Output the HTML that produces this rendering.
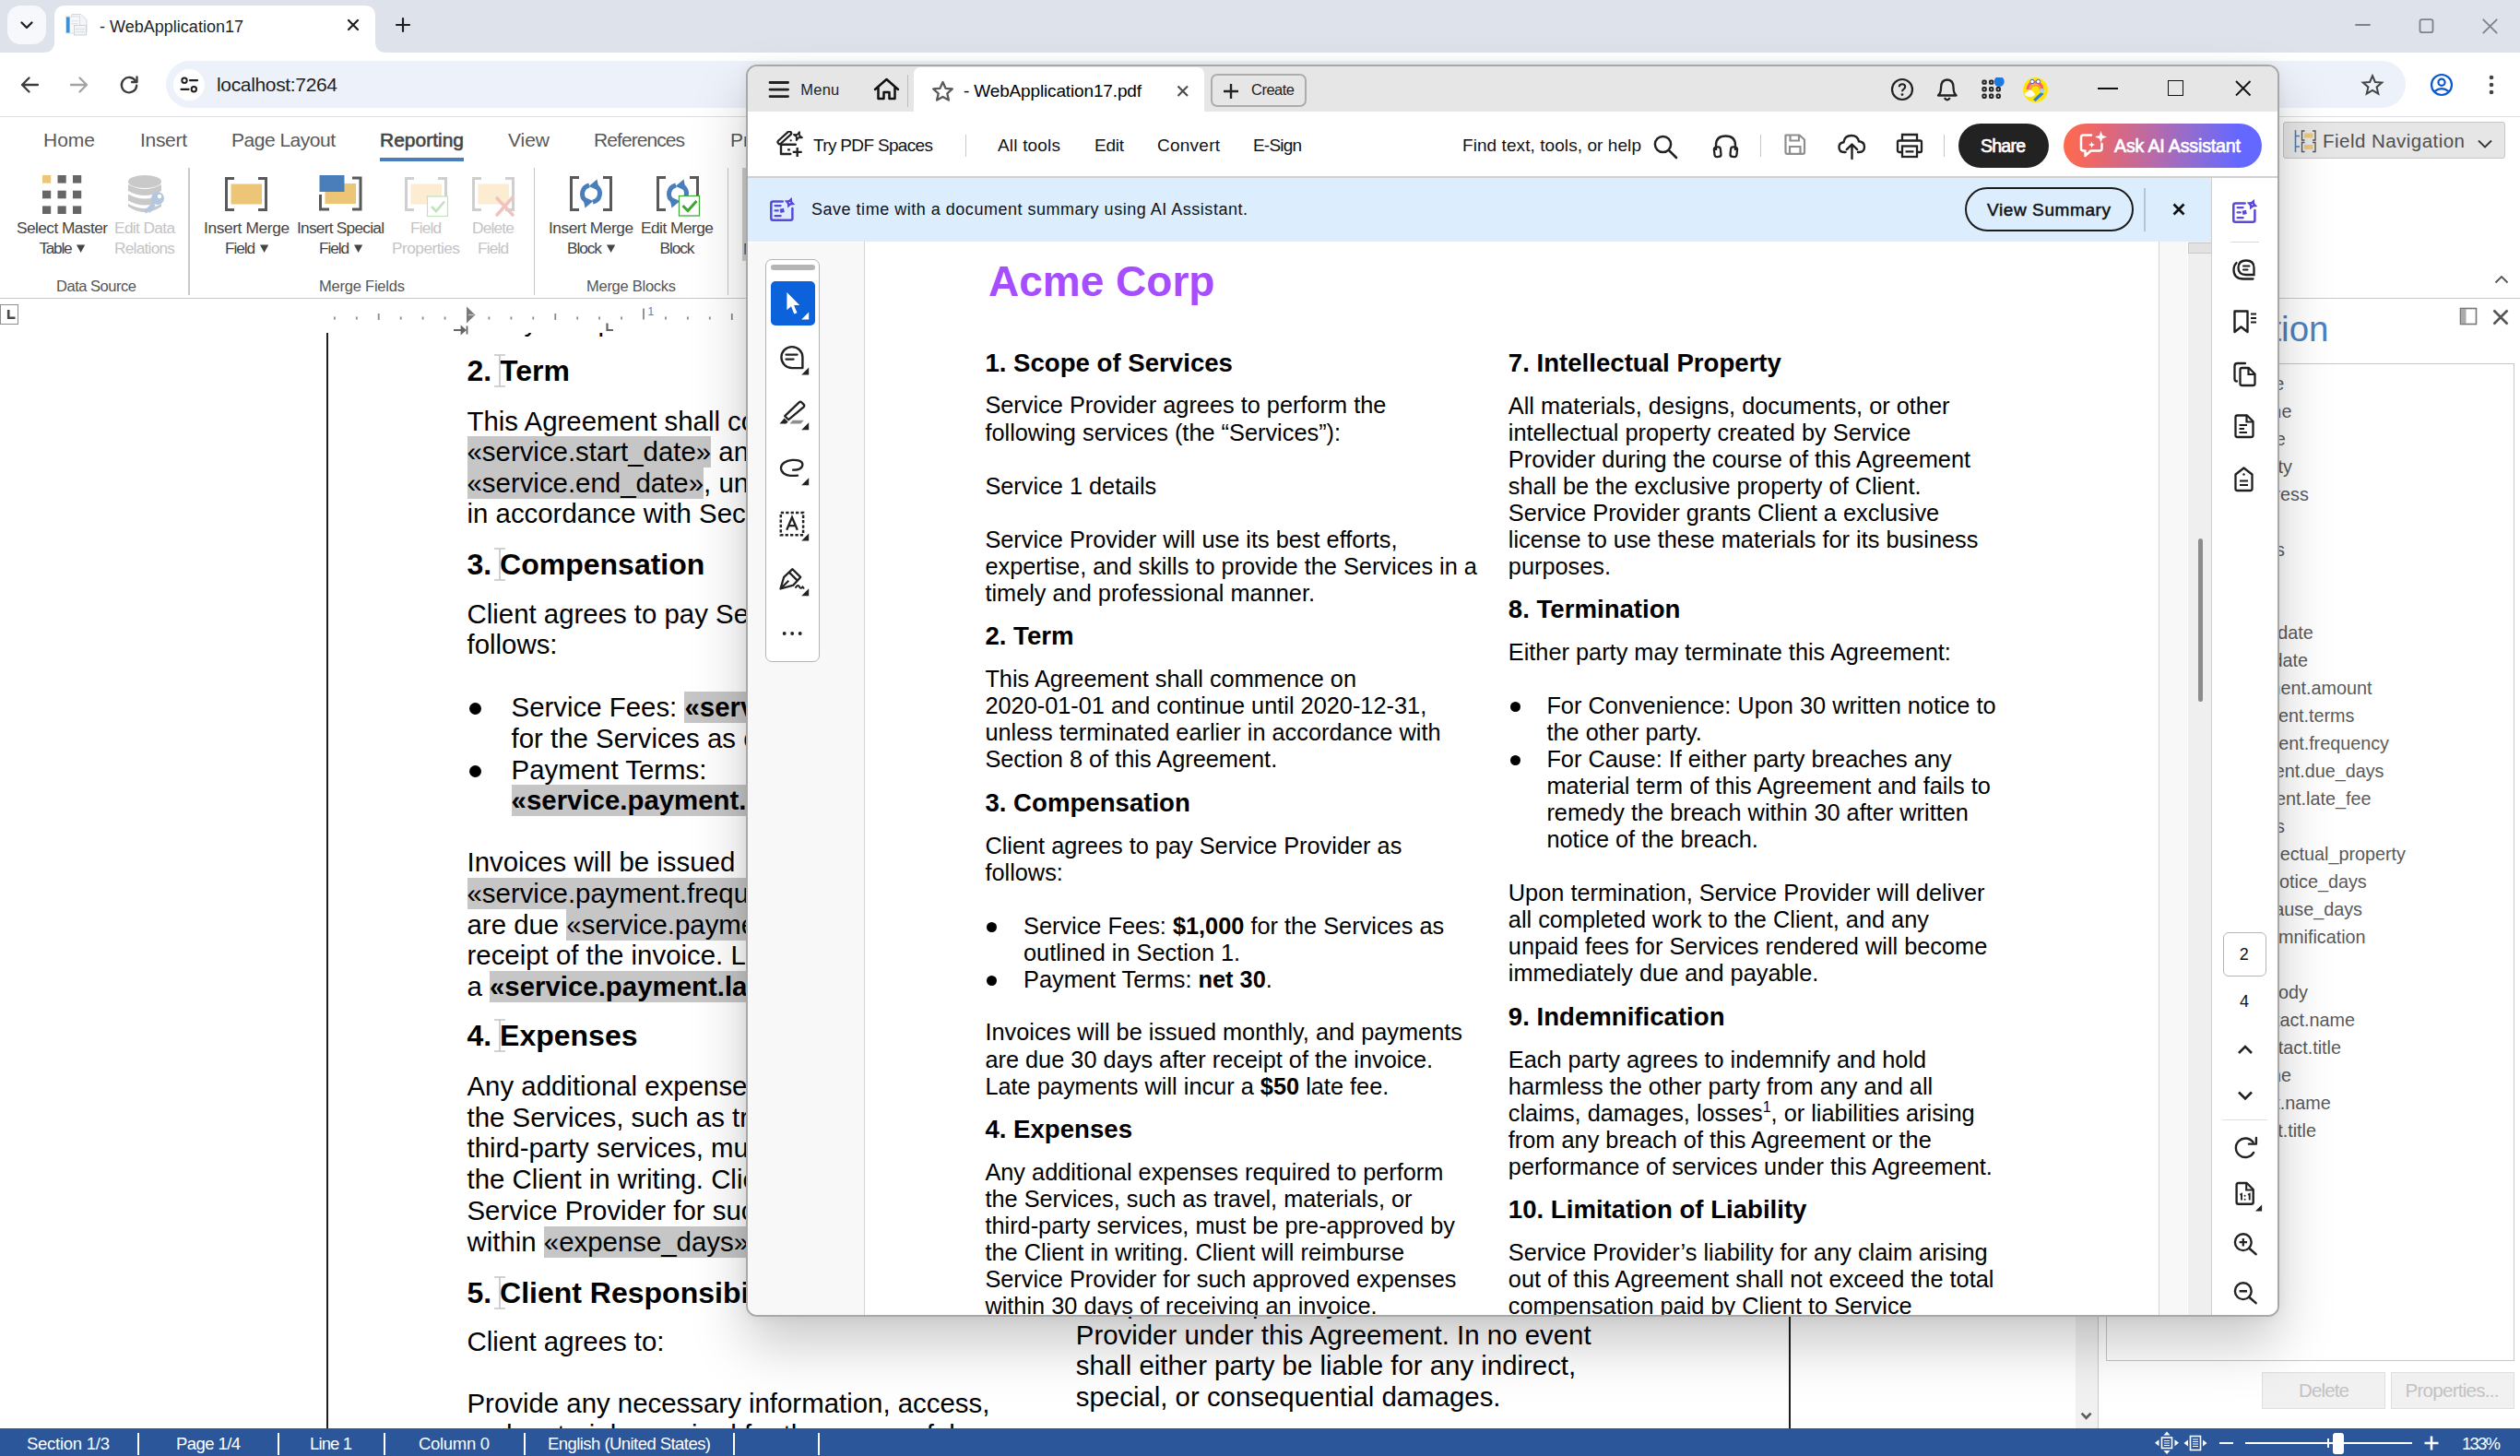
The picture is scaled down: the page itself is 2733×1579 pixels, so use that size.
<!DOCTYPE html>
<html lang="en"><head><meta charset="utf-8"><title>- WebApplication17</title>
<style>
html,body{margin:0;padding:0}
body{width:2733px;height:1579px;position:relative;overflow:hidden;background:#fff;font-family:"Liberation Sans",sans-serif}
.a{position:absolute;display:block}
.t{position:absolute;white-space:pre;line-height:1;font-family:"Liberation Sans",sans-serif}
</style></head>
<body>
<div class="a" style="left:0px;top:0px;width:2733px;height:57px;background:#dee2ea;"></div>
<div class="a" style="left:8px;top:6px;width:42px;height:42px;background:#f6f8fc;border-radius:14px;"></div>
<svg class="a" style="left:19px;top:17px;" width="20" height="20" viewBox="0 0 20 20"><path d="M4.5 7.5 L10 13 L15.5 7.5" fill="none" stroke="#1f1f1f" stroke-width="2.3" stroke-linecap="round" stroke-linejoin="round"/></svg>
<svg class="a" style="left:47px;top:6px;" width="372" height="51" viewBox="0 0 372 51"><path d="M0 51 Q12 51 12 39 L12 12 Q12 0 24 0 L348 0 Q360 0 360 12 L360 39 Q360 51 372 51 Z" fill="#fff"/></svg>
<svg class="a" style="left:70px;top:14px;" width="26" height="26" viewBox="0 0 26 26"><path d="M8 1.5h10l6 6v13h-16z" fill="#f4f5f7" stroke="#d3d6db" stroke-width="1"/>
<rect x="1.5" y="4" width="15" height="18" fill="#f7f8fa" stroke="#d9dce1" stroke-width="1"/>
<rect x="2" y="4.5" width="3.6" height="17" fill="#3f8fd6"/>
<rect x="7.5" y="8" width="7" height="1.2" fill="#dfe2e6"/><rect x="7.5" y="11" width="7" height="1.2" fill="#dfe2e6"/>
<rect x="10.5" y="13.5" width="13" height="10.5" fill="#f2f4f7" stroke="#cfd3d9" stroke-width="1"/>
<rect x="12" y="17" width="10" height="1.2" fill="#dde0e5"/><rect x="12" y="20" width="10" height="1.2" fill="#dde0e5"/></svg>
<span class="t" style="left:108.00px;top:20.00px;font-size:18px;color:#1f1f1f;letter-spacing:0.014px;">- WebApplication17</span>
<svg class="a" style="left:375px;top:19px;" width="16" height="16" viewBox="0 0 16 16"><path d="M3 3 L13 13 M13 3 L3 13" stroke="#1f1f1f" stroke-width="2.2" stroke-linecap="round"/></svg>
<svg class="a" style="left:428px;top:18px;" width="18" height="18" viewBox="0 0 18 18"><path d="M9 2 V16 M2 9 H16" stroke="#1f1f1f" stroke-width="2.2" stroke-linecap="round"/></svg>
<svg class="a" style="left:2552px;top:17px;" width="20" height="20" viewBox="0 0 20 20"><path d="M3 10 H18" stroke="#7d838a" stroke-width="1.8" stroke-linecap="round"/></svg>
<svg class="a" style="left:2621px;top:18px;" width="20" height="20" viewBox="0 0 20 20"><rect x="3.5" y="3.2" width="14" height="14" rx="2.2" fill="none" stroke="#7d838a" stroke-width="1.8"/></svg>
<svg class="a" style="left:2690px;top:18px;" width="20" height="20" viewBox="0 0 20 20"><path d="M3.3 3.3 L17.7 17.7 M17.7 3.3 L3.3 17.7" stroke="#7d838a" stroke-width="1.8" stroke-linecap="round"/></svg>
<div class="a" style="left:0px;top:57px;width:2733px;height:69.5px;background:#fff;border-radius:12px 10px 0 0;"></div>
<div class="a" style="left:0px;top:126.1px;width:2733px;height:1.2px;background:#dddfe3;"></div>
<svg class="a" style="left:20px;top:80px;" width="24" height="24" viewBox="0 0 24 24"><path d="M21 12 H4.5 M11.5 4.5 L4 12 L11.5 19.5" fill="none" stroke="#3c3c3c" stroke-width="2.3" stroke-linecap="round" stroke-linejoin="round"/></svg>
<svg class="a" style="left:74px;top:80px;" width="24" height="24" viewBox="0 0 24 24"><path d="M3 12 H19.5 M12.5 4.5 L20 12 L12.5 19.5" fill="none" stroke="#a3a3a3" stroke-width="2.3" stroke-linecap="round" stroke-linejoin="round"/></svg>
<svg class="a" style="left:128px;top:80px;" width="24" height="24" viewBox="0 0 24 24"><path d="M19.2 8.2 A8.2 8.2 0 1 0 20.2 12.6" fill="none" stroke="#3c3c3c" stroke-width="2.3" stroke-linecap="round"/><path d="M20.5 3.5 V9 H15" fill="none" stroke="#3c3c3c" stroke-width="2.3" stroke-linecap="round" stroke-linejoin="round"/></svg>
<div class="a" style="left:180px;top:66px;width:2429px;height:51px;background:#edf1f9;border-radius:26px;"></div>
<div class="a" style="left:188px;top:75px;width:34px;height:34px;background:#fff;border-radius:17px;"></div>
<svg class="a" style="left:194px;top:81px;" width="22" height="22" viewBox="0 0 22 22"><circle cx="6" cy="6.2" r="2.7" fill="none" stroke="#1f1f1f" stroke-width="2"/><path d="M12 6.2 H20" stroke="#1f1f1f" stroke-width="2.2" stroke-linecap="round"/><circle cx="16.3" cy="15.8" r="2.7" fill="none" stroke="#1f1f1f" stroke-width="2"/><path d="M2.5 15.8 H10.5" stroke="#1f1f1f" stroke-width="2.2" stroke-linecap="round"/></svg>
<span class="t" style="left:235.00px;top:81.00px;font-size:21px;color:#1f1f1f;letter-spacing:-0.341px;">localhost:7264</span>
<svg class="a" style="left:2560px;top:79px;" width="26" height="26" viewBox="0 0 26 26"><path d="M13 3.2 L15.9 10 L23.2 10.6 L17.6 15.4 L19.3 22.6 L13 18.8 L6.7 22.6 L8.4 15.4 L2.8 10.6 L10.1 10 Z" fill="none" stroke="#444" stroke-width="2" stroke-linejoin="miter"/></svg>
<svg class="a" style="left:2634px;top:78px;" width="28" height="28" viewBox="0 0 28 28"><circle cx="14" cy="14" r="11" fill="none" stroke="#0b57d0" stroke-width="2.2"/><circle cx="14" cy="11.3" r="3.6" fill="none" stroke="#0b57d0" stroke-width="2.2"/><path d="M6.3 21.2 Q14 15.2 21.7 21.2" fill="none" stroke="#0b57d0" stroke-width="2.2"/></svg>
<svg class="a" style="left:2696px;top:78px;" width="12" height="28" viewBox="0 0 12 28"><circle cx="6" cy="6" r="2.3" fill="#444"/><circle cx="6" cy="14" r="2.3" fill="#444"/><circle cx="6" cy="22" r="2.3" fill="#444"/></svg>
<span class="t" style="left:47.00px;top:141.00px;font-size:21px;color:#595959;letter-spacing:-0.010px;">Home</span>
<span class="t" style="left:152.00px;top:141.00px;font-size:21px;color:#595959;letter-spacing:-0.306px;">Insert</span>
<span class="t" style="left:251.00px;top:141.00px;font-size:21px;color:#595959;letter-spacing:-0.494px;">Page Layout</span>
<span class="t" style="left:551.00px;top:141.00px;font-size:21px;color:#595959;letter-spacing:-0.047px;">View</span>
<span class="t" style="left:644.00px;top:141.00px;font-size:21px;color:#595959;letter-spacing:-0.932px;">References</span>
<span class="t" style="left:412.00px;top:141.00px;font-size:21px;color:#444;letter-spacing:-0.008px;-webkit-text-stroke:0.6px #444;">Reporting</span>
<span class="t" style="left:792.00px;top:141.00px;font-size:21px;color:#595959;">Proofing</span>
<div class="a" style="left:412px;top:170.5px;width:91px;height:4.5px;background:#4a7ebb;"></div>
<div class="a" style="left:2475.5px;top:131.5px;width:241px;height:40px;background:#e6e6e6;border:1px solid #c6c6c6;border-radius:3px;box-sizing:border-box;"></div>
<svg class="a" style="left:2487px;top:140px;" width="26" height="26" viewBox="0 0 26 26"><path d="M2.5 1 V25 M2.5 7.5 H7 M2.5 19 H7" stroke="#3f7fc1" stroke-width="1.6" fill="none"/>
<path d="M12.5 2 H9.5 V12 H12.5 M21 2 H24 V12 H21" stroke="#555" stroke-width="1.4" fill="none"/><rect x="12" y="4.5" width="9.5" height="5" fill="#ecc576"/>
<path d="M12.5 14.5 H9.5 V24.5 H12.5 M21 14.5 H24 V24.5 H21" stroke="#555" stroke-width="1.4" fill="none"/><rect x="12" y="17" width="9.5" height="5" fill="#ecc576"/></svg>
<span class="t" style="left:2519.00px;top:143.00px;font-size:20.5px;color:#4f4f4f;letter-spacing:0.467px;">Field Navigation</span>
<svg class="a" style="left:2685px;top:149px;" width="20" height="14" viewBox="0 0 20 14"><path d="M3 3.5 L10 10.5 L17 3.5" fill="none" stroke="#333" stroke-width="1.8"/></svg>
<svg class="a" style="left:2703px;top:296px;" width="20" height="14" viewBox="0 0 20 14"><path d="M3.5 10.5 L10 4 L16.5 10.5" fill="none" stroke="#555" stroke-width="1.9"/></svg>
<div class="a" style="left:204.25px;top:182px;width:1.5px;height:138px;background:#c9c9c9;"></div>
<div class="a" style="left:578.75px;top:182px;width:1.5px;height:138px;background:#c9c9c9;"></div>
<div class="a" style="left:788.75px;top:182px;width:1.5px;height:138px;background:#c9c9c9;"></div>
<div class="a" style="left:805px;top:182px;width:6px;height:101px;background:#cfcfcf;"></div>
<span class="t" style="left:806.00px;top:262.00px;font-size:17px;color:#555;">M</span>
<div class="a" style="left:0px;top:323.1px;width:2733px;height:1.2px;background:#c8c8c8;"></div>
<span class="t" style="left:61.00px;top:302.00px;font-size:16.5px;color:#555;letter-spacing:-0.472px;">Data Source</span>
<span class="t" style="left:346.00px;top:302.00px;font-size:16.5px;color:#555;letter-spacing:-0.216px;">Merge Fields</span>
<span class="t" style="left:636.00px;top:302.00px;font-size:16.5px;color:#555;letter-spacing:-0.268px;">Merge Blocks</span>
<span class="t" style="left:18.00px;top:239.00px;font-size:17.3px;color:#444;letter-spacing:-0.555px;">Select Master</span>
<span class="t" style="left:42.50px;top:261.00px;font-size:17.3px;color:#444;letter-spacing:-1.328px;">Table</span>
<svg class="a" style="left:83.3px;top:265px;" width="10" height="10" viewBox="0 0 10 10"><path d="M0 0.6 H9.2 L4.6 9 Z" fill="#444"/></svg>
<span class="t" style="left:124.00px;top:239.00px;font-size:17.3px;color:#c4c4c4;letter-spacing:-0.637px;">Edit Data</span>
<span class="t" style="left:124.00px;top:261.00px;font-size:17.3px;color:#c4c4c4;letter-spacing:-0.756px;">Relations</span>
<span class="t" style="left:221.00px;top:239.00px;font-size:17.3px;color:#444;letter-spacing:-0.365px;">Insert Merge</span>
<span class="t" style="left:244.00px;top:261.00px;font-size:17.3px;color:#444;letter-spacing:-1.117px;">Field</span>
<svg class="a" style="left:281.8px;top:265px;" width="10" height="10" viewBox="0 0 10 10"><path d="M0 0.6 H9.2 L4.6 9 Z" fill="#444"/></svg>
<span class="t" style="left:322.00px;top:239.00px;font-size:17.3px;color:#444;letter-spacing:-0.746px;">Insert Special</span>
<span class="t" style="left:346.00px;top:261.00px;font-size:17.3px;color:#444;letter-spacing:-1.117px;">Field</span>
<svg class="a" style="left:383.8px;top:265px;" width="10" height="10" viewBox="0 0 10 10"><path d="M0 0.6 H9.2 L4.6 9 Z" fill="#444"/></svg>
<span class="t" style="left:445.00px;top:239.00px;font-size:17.3px;color:#c4c4c4;letter-spacing:-0.867px;">Field</span>
<span class="t" style="left:425.00px;top:261.00px;font-size:17.3px;color:#c4c4c4;letter-spacing:-0.530px;">Properties</span>
<span class="t" style="left:512.00px;top:239.00px;font-size:17.3px;color:#c4c4c4;letter-spacing:-0.794px;">Delete</span>
<span class="t" style="left:518.00px;top:261.00px;font-size:17.3px;color:#c4c4c4;letter-spacing:-0.867px;">Field</span>
<span class="t" style="left:595.00px;top:239.00px;font-size:17.3px;color:#444;letter-spacing:-0.456px;">Insert Merge</span>
<span class="t" style="left:615.00px;top:261.00px;font-size:17.3px;color:#444;letter-spacing:-1.066px;">Block</span>
<svg class="a" style="left:657.8px;top:265px;" width="10" height="10" viewBox="0 0 10 10"><path d="M0 0.6 H9.2 L4.6 9 Z" fill="#444"/></svg>
<span class="t" style="left:695.00px;top:239.00px;font-size:17.3px;color:#444;letter-spacing:-0.509px;">Edit Merge</span>
<span class="t" style="left:715.50px;top:261.00px;font-size:17.3px;color:#444;letter-spacing:-1.066px;">Block</span>
<svg class="a" style="left:46px;top:190px;" width="43" height="43" viewBox="0 0 43 43"><rect x="0" y="0" width="9.2" height="8.6" fill="#ecc576"/><rect x="16.5" y="0" width="9.2" height="8.6" fill="#666"/><rect x="33" y="0" width="9.2" height="8.6" fill="#666"/><rect x="0" y="16.7" width="9.2" height="8.6" fill="#666"/><rect x="16.5" y="16.7" width="9.2" height="8.6" fill="#666"/><rect x="33" y="16.7" width="9.2" height="8.6" fill="#666"/><rect x="0" y="33.4" width="9.2" height="8.6" fill="#666"/><rect x="16.5" y="33.4" width="9.2" height="8.6" fill="#666"/><rect x="33" y="33.4" width="9.2" height="8.6" fill="#666"/></svg>
<svg class="a" style="left:138px;top:189px;" width="42" height="44" viewBox="0 0 42 44"><g fill="#c9c9c9"><ellipse cx="19" cy="8" rx="18" ry="7"/><path d="M1 11 Q19 21 37 11 V18 Q19 28 1 18 Z"/><path d="M1 21.5 Q19 31.5 37 21.5 V28.5 Q19 38.5 1 28.5 Z"/><path d="M1 32 Q19 42 37 32 V35 Q19 47 1 35 Z"/></g>
<g><circle cx="33" cy="26" r="7" fill="#b3c7e0"/><circle cx="35" cy="24" r="2.2" fill="#fff"/><path d="M28 30 L18 40 L20.5 42.5 L23 40.5 L24.5 42 L30.5 34 Z" fill="#b3c7e0"/></g></svg>
<svg class="a" style="left:244px;top:191.5px;" width="46" height="37" viewBox="0 0 46 37"><path d="M10 1.5 H1.5 V35.5 H10 M36 1.5 H44.5 V35.5 H36" fill="none" stroke="#595959" stroke-width="3"/><rect x="6.5" y="7.5" width="33.5" height="22" fill="#ecc576"/></svg>
<svg class="a" style="left:346px;top:190px;" width="47" height="39" viewBox="0 0 47 39"><path d="M11 37 H1.5 V21 M36 3 H45 V37 H36" fill="none" stroke="#595959" stroke-width="3"/>
<rect x="6.5" y="9" width="33.5" height="22" fill="#ecc576"/><rect x="0.5" y="0" width="27" height="18" fill="#4a7ebb"/></svg>
<svg class="a" style="left:439px;top:191.5px;" width="48" height="44" viewBox="0 0 48 44"><path d="M10 1.5 H1.5 V35.5 H10 M36 1.5 H44.5 V35.5 H36" fill="none" stroke="#cfcfcf" stroke-width="3"/><rect x="6.5" y="7.5" width="33.5" height="22" fill="#fbecd2"/>
<rect x="24.5" y="21" width="22" height="21.5" fill="#fff" stroke="#bfe3bd" stroke-width="1.2"/><path d="M29 32 L34 37 L43 26.5" fill="none" stroke="#bfe3bd" stroke-width="2.6"/></svg>
<svg class="a" style="left:512px;top:191.5px;" width="48" height="44" viewBox="0 0 48 44"><path d="M10 1.5 H1.5 V35.5 H10 M36 1.5 H44.5 V35.5 H36" fill="none" stroke="#cfcfcf" stroke-width="3"/><rect x="6.5" y="7.5" width="33.5" height="22" fill="#fbecd2"/>
<path d="M27 23 L44 41 M44 22 L27 41" stroke="#f0c4bd" stroke-width="3.6" stroke-linecap="round"/></svg>
<svg class="a" style="left:618px;top:191px;" width="46" height="38" viewBox="0 0 46 38"><path d="M10 1.5 H1.5 V36.5 H10 M36 1.5 H44.5 V36.5 H36" fill="none" stroke="#595959" stroke-width="3"/><g fill="none" stroke="#4a7ebb" stroke-width="5"><path d="M21 10 A9.5 9.5 0 0 0 17.5 27"/><path d="M25 28 A9.5 9.5 0 0 0 28.5 11"/></g>
<path d="M14 22 L25.5 27 L16.5 34.5 Z" fill="#4a7ebb"/><path d="M32 16 L20.5 11 L29.5 3.5 Z" fill="#4a7ebb"/></svg>
<svg class="a" style="left:712px;top:191px;" width="48" height="45" viewBox="0 0 48 45"><path d="M10 1.5 H1.5 V36.5 H10 M36 1.5 H44.5 V36.5 H36" fill="none" stroke="#595959" stroke-width="3"/><g fill="none" stroke="#4a7ebb" stroke-width="5"><path d="M21 10 A9.5 9.5 0 0 0 17.5 27"/><path d="M25 28 A9.5 9.5 0 0 0 28.5 11"/></g>
<path d="M14 22 L25.5 27 L16.5 34.5 Z" fill="#4a7ebb"/><path d="M32 16 L20.5 11 L29.5 3.5 Z" fill="#4a7ebb"/><rect x="24.5" y="21.5" width="22" height="21.5" fill="#fff" stroke="#49a942" stroke-width="1.3"/><path d="M28.5 32 L34 37.5 L43.5 27" fill="none" stroke="#3fa535" stroke-width="3"/></svg>
<div class="a" style="left:0px;top:329.5px;width:19.5px;height:22px;border:1px solid #8e8e8e;box-sizing:border-box;background:#fff;"></div>
<svg class="a" style="left:7px;top:335px;" width="11" height="12" viewBox="0 0 11 12"><path d="M2.2 1 V9.8 H9.5" fill="none" stroke="#4a4a4a" stroke-width="2.6"/></svg>
<svg class="a" style="left:300px;top:330px;" width="520" height="36" viewBox="0 0 520 36"><rect x="62.0" y="13.5" width="1.8" height="3" fill="#8a8a8a"/><rect x="85.9" y="13.5" width="1.8" height="3" fill="#8a8a8a"/><rect x="109.8" y="10" width="1.8" height="7" fill="#8a8a8a"/><rect x="133.8" y="13.5" width="1.8" height="3" fill="#8a8a8a"/><rect x="157.7" y="13.5" width="1.8" height="3" fill="#8a8a8a"/><rect x="181.7" y="13.5" width="1.8" height="3" fill="#8a8a8a"/><rect x="229.5" y="13.5" width="1.8" height="3" fill="#8a8a8a"/><rect x="253.5" y="13.5" width="1.8" height="3" fill="#8a8a8a"/><rect x="277.4" y="13.5" width="1.8" height="3" fill="#8a8a8a"/><rect x="301.4" y="10" width="1.8" height="7" fill="#8a8a8a"/><rect x="325.3" y="13.5" width="1.8" height="3" fill="#8a8a8a"/><rect x="349.2" y="13.5" width="1.8" height="3" fill="#8a8a8a"/><rect x="373.2" y="13.5" width="1.8" height="3" fill="#8a8a8a"/><rect x="397.1" y="4.5" width="1.8" height="12" fill="#8a8a8a"/><rect x="421.1" y="13.5" width="1.8" height="3" fill="#8a8a8a"/><rect x="445.0" y="13.5" width="1.8" height="3" fill="#8a8a8a"/><rect x="468.9" y="13.5" width="1.8" height="3" fill="#8a8a8a"/><rect x="492.9" y="10" width="1.8" height="7" fill="#8a8a8a"/><rect x="516.8" y="13.5" width="1.8" height="3" fill="#8a8a8a"/><path d="M206 2.5 L215.5 11.5 L206 20.5 Z" fill="#7a7a7a"/><rect x="208" y="10.8" width="6" height="1.4" fill="#c8c8c8"/><path d="M192 28 H204 M200.5 24.5 L204.5 28 L200.5 31.5 Z M206.5 23.5 V32.5" stroke="#666" stroke-width="1.8" fill="#666"/><path d="M358.5 20.5 V28 H365" fill="none" stroke="#666" stroke-width="2.2"/><rect x="808" y="21" width="3" height="9" fill="#777"/></svg>
<span class="t" style="left:702.50px;top:332.00px;font-size:12px;color:#777;">1</span>
<div class="a" style="left:354px;top:361px;width:2px;height:1188px;background:#1d1d1d;"></div>
<div class="a" style="left:1939.6px;top:361px;width:2px;height:1188px;background:#1d1d1d;"></div>
<div class="a" style="left:2251px;top:324.5px;width:23.5px;height:1224px;background:#f1f1f1;"></div>
<svg class="a" style="left:2254.7px;top:1529.5px;" width="16" height="12" viewBox="0 0 16 12"><path d="M2.6 2.6 L7.6 7.8 L12.6 2.6" fill="none" stroke="#5e5e5e" stroke-width="2.7"/></svg>
<div class="a" style="left:0px;top:1548.5px;width:2733px;height:31px;background:#2b579a;"></div>
<span class="t" style="left:29.00px;top:1557.00px;font-size:18.5px;color:#fff;letter-spacing:-0.258px;">Section 1/3</span>
<span class="t" style="left:191.00px;top:1557.00px;font-size:18.5px;color:#fff;letter-spacing:-0.583px;">Page 1/4</span>
<span class="t" style="left:336.00px;top:1557.00px;font-size:18.5px;color:#fff;letter-spacing:-0.881px;">Line 1</span>
<span class="t" style="left:454.00px;top:1557.00px;font-size:18.5px;color:#fff;letter-spacing:-0.312px;">Column 0</span>
<span class="t" style="left:594.00px;top:1557.00px;font-size:18.5px;color:#fff;letter-spacing:-0.555px;">English (United States)</span>
<div class="a" style="left:149px;top:1554px;width:2px;height:24px;background:#fff;"></div>
<div class="a" style="left:301px;top:1554px;width:2px;height:24px;background:#fff;"></div>
<div class="a" style="left:416px;top:1554px;width:2px;height:24px;background:#fff;"></div>
<div class="a" style="left:568px;top:1554px;width:2px;height:24px;background:#fff;"></div>
<div class="a" style="left:795px;top:1554px;width:2px;height:24px;background:#fff;"></div>
<div class="a" style="left:887px;top:1554px;width:2px;height:24px;background:#fff;"></div>
<span class="t" style="left:2670.00px;top:1557.00px;font-size:18.5px;color:#fff;letter-spacing:-1.776px;">133%</span>
<svg class="a" style="left:2336px;top:1551px;" width="28" height="28" viewBox="0 0 28 28"><rect x="8.5" y="8" width="11" height="11.5" fill="none" stroke="#fff" stroke-width="1.6"/><path d="M11 11.5 H17 M11 14 H17 M11 16.5 H17" stroke="#fff" stroke-width="1.2"/><path d="M14 1.5 L17.5 5.5 H10.5 Z M14 26 L17.5 22 H10.5 Z M1 13.8 L5.5 10.3 V17.3 Z M27 13.8 L22.5 10.3 V17.3 Z" fill="#fff"/></svg>
<svg class="a" style="left:2367px;top:1551px;" width="28" height="28" viewBox="0 0 28 28"><rect x="8.5" y="6.5" width="11" height="15" fill="none" stroke="#fff" stroke-width="1.6"/><path d="M11 10 H17 M11 12.5 H17 M11 15 H17 M11 17.5 H17" stroke="#fff" stroke-width="1.2"/><path d="M1.5 14 L6 10.5 V17.5 Z M26.5 14 L22 10.5 V17.5 Z" fill="#fff"/></svg>
<div class="a" style="left:2407px;top:1563.5px;width:15px;height:2.6px;background:#fff;"></div>
<div class="a" style="left:2435px;top:1564px;width:181px;height:1.8px;background:#fff;"></div>
<div class="a" style="left:2524px;top:1560px;width:2px;height:10px;background:#fff;"></div>
<div class="a" style="left:2530px;top:1553.5px;width:11.5px;height:23px;background:#fff;border-radius:3px;"></div>
<svg class="a" style="left:2628px;top:1556px;" width="18" height="18" viewBox="0 0 18 18"><path d="M9 1.5 V16.5 M1.5 9 H16.5" stroke="#fff" stroke-width="2.6"/></svg>
<div class="a" style="left:0;top:361px;width:2249px;height:1187.5px;overflow:hidden"><div class="a" style="left:0;top:-361px"><span class="t" style="left:506.50px;top:334.00px;font-size:29.4px;color:#000;">timely and professional manner.</span>
<span class="t" style="left:506.50px;top:386.00px;font-size:32.0px;color:#000;font-weight:700;">2. Term</span>
<span class="t" style="left:506.50px;top:442.00px;font-size:29.4px;color:#000;">This Agreement shall commence on</span>
<span class="t" style="left:506.50px;top:475.00px;font-size:29.4px;color:#000;"><span style="background:#c6c6c6;padding-bottom:1px">«service.start_date»</span> and continue until</span>
<span class="t" style="left:506.50px;top:509.00px;font-size:29.4px;color:#000;"><span style="background:#c6c6c6;padding-bottom:1px">«service.end_date»</span>, unless terminated earlier</span>
<span class="t" style="left:506.50px;top:542.00px;font-size:29.4px;color:#000;">in accordance with Section 8 of this Agreement.</span>
<span class="t" style="left:506.50px;top:596.00px;font-size:32.0px;color:#000;font-weight:700;">3. Compensation</span>
<span class="t" style="left:506.50px;top:651.00px;font-size:29.4px;color:#000;">Client agrees to pay Service Provider as</span>
<span class="t" style="left:506.50px;top:684.00px;font-size:29.4px;color:#000;">follows:</span>
<div class="a" style="left:509px;top:762.3px;width:13px;height:13px;background:#000;border-radius:50%;"></div>
<span class="t" style="left:554.60px;top:752.00px;font-size:29.4px;color:#000;">Service Fees: <b><span style="background:#c6c6c6;padding-bottom:1px">«service.payment.amount»</span></b></span>
<span class="t" style="left:554.60px;top:786.00px;font-size:29.4px;color:#000;">for the Services as outlined in Section 1.</span>
<div class="a" style="left:509px;top:829.54px;width:13px;height:13px;background:#000;border-radius:50%;"></div>
<span class="t" style="left:554.60px;top:820.00px;font-size:29.4px;color:#000;">Payment Terms:</span>
<span class="t" style="left:554.60px;top:853.00px;font-size:29.4px;color:#000;"><b><span style="background:#c6c6c6;padding-bottom:1px">«service.payment.terms»</span></b>.</span>
<span class="t" style="left:506.50px;top:920.00px;font-size:29.4px;color:#000;">Invoices will be issued </span>
<span class="t" style="left:506.50px;top:954.00px;font-size:29.4px;color:#000;"><span style="background:#c6c6c6;padding-bottom:1px">«service.payment.frequency»</span>, and payments</span>
<span class="t" style="left:506.50px;top:988.00px;font-size:29.4px;color:#000;">are due <span style="background:#c6c6c6;padding-bottom:1px">«service.payment.due_days»</span> days after</span>
<span class="t" style="left:506.50px;top:1021.00px;font-size:29.4px;color:#000;">receipt of the invoice. Late payments will incur</span>
<span class="t" style="left:506.50px;top:1055.00px;font-size:29.4px;color:#000;">a <b><span style="background:#c6c6c6;padding-bottom:1px">«service.payment.late_fee»</span></b> late fee.</span>
<span class="t" style="left:506.50px;top:1107.00px;font-size:32.0px;color:#000;font-weight:700;">4. Expenses</span>
<span class="t" style="left:506.50px;top:1163.00px;font-size:29.4px;color:#000;">Any additional expenses required to perform</span>
<span class="t" style="left:506.50px;top:1197.00px;font-size:29.4px;color:#000;">the Services, such as travel, materials, or</span>
<span class="t" style="left:506.50px;top:1230.00px;font-size:29.4px;color:#000;">third-party services, must be pre-approved by</span>
<span class="t" style="left:506.50px;top:1264.00px;font-size:29.4px;color:#000;">the Client in writing. Client will reimburse</span>
<span class="t" style="left:506.50px;top:1298.00px;font-size:29.4px;color:#000;">Service Provider for such approved expenses</span>
<span class="t" style="left:506.50px;top:1332.00px;font-size:29.4px;color:#000;">within <span style="background:#c6c6c6;padding-bottom:1px">«expense_days»</span> days of receiving an invoice.</span>
<span class="t" style="left:506.50px;top:1386.00px;font-size:32.0px;color:#000;font-weight:700;">5. Client Responsibilities</span>
<span class="t" style="left:506.50px;top:1440.00px;font-size:29.4px;color:#000;">Client agrees to:</span>
<span class="t" style="left:506.50px;top:1507.00px;font-size:29.4px;color:#000;">Provide any necessary information, access,</span>
<span class="t" style="left:506.50px;top:1541.00px;font-size:29.4px;color:#000;">and materials required for the successful</span>
<svg class="a" style="left:535px;top:384.4px;" width="14" height="36" viewBox="0 0 14 36"><path d="M1 1 H13 M7 1 V35 M1 35 H13" stroke="#c4c4c4" stroke-width="1.6" fill="none"/></svg>
<svg class="a" style="left:535px;top:594.0px;" width="14" height="36" viewBox="0 0 14 36"><path d="M1 1 H13 M7 1 V35 M1 35 H13" stroke="#c4c4c4" stroke-width="1.6" fill="none"/></svg>
<svg class="a" style="left:535px;top:1105.3px;" width="14" height="36" viewBox="0 0 14 36"><path d="M1 1 H13 M7 1 V35 M1 35 H13" stroke="#c4c4c4" stroke-width="1.6" fill="none"/></svg>
<svg class="a" style="left:535px;top:1383.8px;" width="14" height="36" viewBox="0 0 14 36"><path d="M1 1 H13 M7 1 V35 M1 35 H13" stroke="#c4c4c4" stroke-width="1.6" fill="none"/></svg>
<span class="t" style="left:1166.80px;top:1399.00px;font-size:29.4px;color:#000;">compensation paid by Client to Service</span>
<span class="t" style="left:1166.80px;top:1433.00px;font-size:29.4px;color:#000;">Provider under this Agreement. In no event</span>
<span class="t" style="left:1166.80px;top:1466.00px;font-size:29.4px;color:#000;">shall either party be liable for any indirect,</span>
<span class="t" style="left:1166.80px;top:1500.00px;font-size:29.4px;color:#000;">special, or consequential damages.</span></div></div>
<div class="a" style="left:2275px;top:324.5px;width:458px;height:1224px;background:#fff;border-left:1px solid #c9c9c9;box-sizing:border-box;"></div>
<span class="t" style="left:2249.44px;top:338.00px;font-size:38.5px;color:#4a82c4;">Field Navigation</span>
<svg class="a" style="left:2666px;top:332px;" width="22" height="22" viewBox="0 0 22 22"><rect x="2.5" y="2.5" width="17" height="17" fill="#fff" stroke="#777" stroke-width="1.6"/><rect x="3" y="3" width="5.5" height="16" fill="#aaa"/></svg>
<svg class="a" style="left:2702px;top:334px;" width="20" height="20" viewBox="0 0 20 20"><path d="M2.5 2.5 L17.5 17.5 M17.5 2.5 L2.5 17.5" stroke="#555" stroke-width="2.6"/></svg>
<div class="a" style="left:2284px;top:394px;width:443px;height:1082.3px;background:#fff;border:1px solid #c6c6c6;box-sizing:border-box;"></div>
<span class="t" style="left:2343.52px;top:407.00px;font-size:19.8px;color:#5a5a5a;">company.name</span>
<span class="t" style="left:2346.09px;top:437.00px;font-size:19.8px;color:#5a5a5a;">company.phone</span>
<span class="t" style="left:2351.61px;top:467.00px;font-size:19.8px;color:#5a5a5a;">company.state</span>
<span class="t" style="left:2372.03px;top:497.00px;font-size:19.8px;color:#5a5a5a;">company.city</span>
<span class="t" style="left:2349.13px;top:527.00px;font-size:19.8px;color:#5a5a5a;">company.address</span>
<span class="t" style="left:2352.66px;top:587.00px;font-size:19.8px;color:#5a5a5a;">client.contacts</span>
<span class="t" style="left:2352.56px;top:677.00px;font-size:19.8px;color:#5a5a5a;">service.start_date</span>
<span class="t" style="left:2352.33px;top:707.00px;font-size:19.8px;color:#5a5a5a;">service.end_date</span>
<span class="t" style="left:2356.90px;top:737.00px;font-size:19.8px;color:#5a5a5a;">service.payment.amount</span>
<span class="t" style="left:2354.42px;top:767.00px;font-size:19.8px;color:#5a5a5a;">service.payment.terms</span>
<span class="t" style="left:2354.61px;top:797.00px;font-size:19.8px;color:#5a5a5a;">service.payment.frequency</span>
<span class="t" style="left:2350.19px;top:827.00px;font-size:19.8px;color:#5a5a5a;">service.payment.due_days</span>
<span class="t" style="left:2351.58px;top:857.00px;font-size:19.8px;color:#5a5a5a;">service.payment.late_fee</span>
<span class="t" style="left:2350.42px;top:887.00px;font-size:19.8px;color:#5a5a5a;">expense_days</span>
<span class="t" style="left:2363.80px;top:917.00px;font-size:19.8px;color:#5a5a5a;">service.intellectual_property</span>
<span class="t" style="left:2357.78px;top:947.00px;font-size:19.8px;color:#5a5a5a;">termination.notice_days</span>
<span class="t" style="left:2353.08px;top:977.00px;font-size:19.8px;color:#5a5a5a;">termination.cause_days</span>
<span class="t" style="left:2365.49px;top:1007.00px;font-size:19.8px;color:#5a5a5a;">service.indemnification</span>
<span class="t" style="left:2373.22px;top:1067.00px;font-size:19.8px;color:#5a5a5a;">signature.body</span>
<span class="t" style="left:2383.56px;top:1097.00px;font-size:19.8px;color:#5a5a5a;">client.contact.name</span>
<span class="t" style="left:2387.27px;top:1127.00px;font-size:19.8px;color:#5a5a5a;">client.contact.title</span>
<span class="t" style="left:2345.69px;top:1157.00px;font-size:19.8px;color:#5a5a5a;">company.phone</span>
<span class="t" style="left:2324.74px;top:1187.00px;font-size:19.8px;color:#5a5a5a;">company.contact.name</span>
<span class="t" style="left:2327.64px;top:1217.00px;font-size:19.8px;color:#5a5a5a;">company.contact.title</span>
<div class="a" style="left:2453px;top:1487.5px;width:133.5px;height:40px;background:#f1f1f1;border:1px solid #dedede;box-sizing:border-box;"></div>
<div class="a" style="left:2593px;top:1487.5px;width:134px;height:40px;background:#f1f1f1;border:1px solid #dedede;box-sizing:border-box;"></div>
<span class="t" style="left:2493.00px;top:1498.00px;font-size:20.5px;color:#c2c2c2;letter-spacing:-0.853px;">Delete</span>
<span class="t" style="left:2608.50px;top:1498.00px;font-size:20.5px;color:#c2c2c2;letter-spacing:-0.711px;">Properties...</span>
<div class="a" id="acrobat" style="left:809px;top:69.9px;width:1663px;height:1358.1px;box-sizing:border-box;border:2px solid #a8a8a8;border-radius:12px;overflow:hidden;background:#fff;box-shadow:0 30px 60px rgba(0,0,0,.21), 0 1px 14px rgba(0,0,0,.06)"><div class="a" style="left:-811px;top:-71.9px"><div class="a" style="left:811px;top:71px;width:1661px;height:50px;background:#e6e6e6;"></div>
<div class="a" style="left:991px;top:73.3px;width:315px;height:48.5px;background:#fff;border-radius:7px 7px 0 0;"></div>
<svg class="a" style="left:832px;top:87px;" width="28" height="24" viewBox="0 0 28 24"><path d="M3 2.5 H22.6 M3 10.1 H22.6 M3 17.6 H22.6" stroke="#222" stroke-width="2.8" stroke-linecap="round"/></svg>
<span class="t" style="left:868.30px;top:89.00px;font-size:16.5px;color:#222;letter-spacing:0.240px;">Menu</span>
<svg class="a" style="left:946px;top:83.2px;" width="32" height="28" viewBox="0 0 32 28"><path d="M3 14 L15.5 3 L28 14 M6.5 11.5 V24 H12.5 V17 H18.5 V24 H24.5 V11.5" fill="none" stroke="#111" stroke-width="2.5" stroke-linejoin="round" stroke-linecap="round"/></svg>
<div class="a" style="left:984px;top:81px;width:1.2px;height:35px;background:#bdbdbd;"></div>
<svg class="a" style="left:1008.5px;top:85.5px;" width="28" height="28" viewBox="0 0 28 28"><path d="M13.5 3 L16.5 9.8 L23.8 10.5 L18.3 15.4 L19.9 22.6 L13.5 18.9 L7.1 22.6 L8.7 15.4 L3.2 10.5 L10.5 9.8 Z" fill="none" stroke="#5a5a5a" stroke-width="2.3" stroke-linejoin="round"/></svg>
<span class="t" style="left:1045.00px;top:89.00px;font-size:19px;color:#000;letter-spacing:-0.148px;">- WebApplication17.pdf</span>
<svg class="a" style="left:1275px;top:91px;" width="16" height="16" viewBox="0 0 16 16"><path d="M2.5 2.5 L13 13 M13 2.5 L2.5 13" stroke="#4a4a4a" stroke-width="2.1"/></svg>
<div class="a" style="left:1312.5px;top:79.7px;width:104px;height:36px;border:2px solid #adadad;border-radius:7px;box-sizing:border-box;"></div>
<svg class="a" style="left:1325px;top:89px;" width="20" height="20" viewBox="0 0 20 20"><path d="M10 2 V18 M2 10 H18" stroke="#222" stroke-width="2.4"/></svg>
<span class="t" style="left:1357.00px;top:89.00px;font-size:16.5px;color:#222;letter-spacing:-0.506px;">Create</span>
<svg class="a" style="left:2049px;top:83.2px;" width="28" height="28" viewBox="0 0 28 28"><circle cx="14" cy="14" r="11" fill="none" stroke="#222" stroke-width="2.2"/><path d="M10.8 11.3 Q10.8 8.2 14 8.2 Q17.2 8.2 17.2 11 Q17.2 12.8 15.4 13.8 Q14 14.6 14 16.3" fill="none" stroke="#222" stroke-width="2.1"/><circle cx="14" cy="19.6" r="1.4" fill="#222"/></svg>
<svg class="a" style="left:2098px;top:83.2px;" width="28" height="30" viewBox="0 0 28 30"><path d="M4 20.5 Q7 18 7 12.5 Q7 3.5 13.8 3.5 Q20.6 3.5 20.6 12.5 Q20.6 18 23.6 20.5 Z" fill="none" stroke="#222" stroke-width="2.3" stroke-linejoin="round"/><path d="M10.8 23.2 Q13.8 27.5 16.8 23.2" fill="none" stroke="#222" stroke-width="2.3"/></svg>
<svg class="a" style="left:2147px;top:84.2px;" width="30" height="28" viewBox="0 0 30 28"><rect x="3.36" y="3.40" width="3.4" height="3.4" rx="0.9" fill="none" stroke="#222" stroke-width="2"/><rect x="10.96" y="3.40" width="3.4" height="3.4" rx="0.9" fill="none" stroke="#222" stroke-width="2"/><rect x="3.36" y="11.00" width="3.4" height="3.4" rx="0.9" fill="none" stroke="#222" stroke-width="2"/><rect x="10.96" y="11.00" width="3.4" height="3.4" rx="0.9" fill="none" stroke="#222" stroke-width="2"/><rect x="18.56" y="11.00" width="3.4" height="3.4" rx="0.9" fill="none" stroke="#222" stroke-width="2"/><rect x="3.36" y="18.60" width="3.4" height="3.4" rx="0.9" fill="none" stroke="#222" stroke-width="2"/><rect x="10.96" y="18.60" width="3.4" height="3.4" rx="0.9" fill="none" stroke="#222" stroke-width="2"/><rect x="18.56" y="18.60" width="3.4" height="3.4" rx="0.9" fill="none" stroke="#222" stroke-width="2"/><circle cx="21.2" cy="4.5" r="5.5" fill="#1f7ae0"/></svg>
<svg class="a" style="left:2193px;top:83.2px;" width="30" height="30" viewBox="0 0 30 30"><circle cx="14.5" cy="14.5" r="13.4" fill="#ffe600"/>
<path d="M6 14 A8 8 0 0 1 22 14" fill="none" stroke="#ff5a6e" stroke-width="3"/><path d="M9 14.5 A5.3 5.3 0 0 1 19.6 14.5" fill="none" stroke="#ff9a3c" stroke-width="2.4"/>
<circle cx="11" cy="5.5" r="2.2" fill="#fff" stroke="#4a5bd8" stroke-width="1"/><circle cx="17.5" cy="5.5" r="2.2" fill="#fff" stroke="#4a5bd8" stroke-width="1"/>
<ellipse cx="8.5" cy="19" rx="5.5" ry="3" fill="#fff"/><circle cx="9" cy="17" r="2.6" fill="#fff"/>
<path d="M12 25 L21 16.5 L23.5 19 L14.5 27 Z" fill="#2f7de1"/><circle cx="21.5" cy="15.5" r="2.4" fill="#9fd3ff"/></svg>
<div class="a" style="left:2275px;top:94.6px;width:21.5px;height:2.8px;background:#111;"></div>
<div class="a" style="left:2350.5px;top:86.5px;width:17.2px;height:17.2px;border:1.9px solid #111;box-sizing:border-box;"></div>
<svg class="a" style="left:2421.6px;top:84.5px;" width="22" height="22" viewBox="0 0 22 22"><path d="M3 3 L18.5 18.5 M18.5 3 L3 18.5" stroke="#111" stroke-width="1.9"/></svg>
<div class="a" style="left:811px;top:121.5px;width:1661px;height:70px;background:#fff;"></div>
<div class="a" style="left:811px;top:191.3px;width:1661px;height:1.8px;background:#d0d0d0;"></div>
<svg class="a" style="left:841px;top:142px;" width="32" height="32" viewBox="0 0 32 32"><path d="M4.6 12 L15 2.6" stroke="#222" stroke-width="6.4" stroke-linecap="round"/><path d="M4.6 12 L15 2.6" stroke="#fff" stroke-width="1.9" stroke-linecap="round"/>
<path d="M6 14.4 V25 H16.3 M7.4 14.7 H21.8" fill="none" stroke="#222" stroke-width="2.4" stroke-linejoin="round" stroke-linecap="round"/>
<path d="M13 20.4 H15.9" stroke="#222" stroke-width="2.1"/><circle cx="16.7" cy="10.3" r="1.15" fill="#222"/>
<path d="M26.04 1.09 L25.94 4.88 L28.91 7.24 L25.12 7.14 L22.76 10.11 L22.86 6.32 L19.89 3.96 L23.68 4.06 Z" fill="none" stroke="#222" stroke-width="1.8" stroke-linejoin="round"/>
<path d="M23.7 17.9 V27.9 M18.7 22.9 H28.7" stroke="#222" stroke-width="2.4"/></svg>
<span class="t" style="left:882.00px;top:148.00px;font-size:19px;color:#111;letter-spacing:-0.667px;">Try PDF Spaces</span>
<div class="a" style="left:1047px;top:146.3px;width:1.3px;height:24px;background:#c8c8c8;"></div>
<span class="t" style="left:1082.00px;top:148.00px;font-size:19px;color:#111;letter-spacing:0.184px;">All tools</span>
<span class="t" style="left:1187.00px;top:148.00px;font-size:19px;color:#111;letter-spacing:-0.250px;">Edit</span>
<span class="t" style="left:1255.00px;top:148.00px;font-size:19px;color:#111;letter-spacing:0.245px;">Convert</span>
<span class="t" style="left:1359.00px;top:148.00px;font-size:19px;color:#111;letter-spacing:-0.806px;">E-Sign</span>
<span class="t" style="left:1586.00px;top:148.00px;font-size:19px;color:#111;letter-spacing:0.074px;">Find text, tools, or help</span>
<svg class="a" style="left:1792px;top:145.3px;" width="30" height="30" viewBox="0 0 30 30"><circle cx="11.5" cy="11.5" r="8.6" fill="none" stroke="#222" stroke-width="2.5"/><path d="M17.8 17.8 L26 26" stroke="#222" stroke-width="2.6" stroke-linecap="round"/></svg>
<svg class="a" style="left:1856px;top:143.7px;" width="32" height="30" viewBox="0 0 32 30"><path d="M5 19 V13.5 Q5 3.5 15.5 3.5 Q26 3.5 26 13.5 V19" fill="none" stroke="#222" stroke-width="2.4"/><rect x="3.2" y="15.5" width="7" height="10.5" rx="2.6" fill="none" stroke="#222" stroke-width="2.3" transform="rotate(-6 6.7 20.7)"/><rect x="20.8" y="15.5" width="7" height="10.5" rx="2.6" fill="none" stroke="#222" stroke-width="2.3" transform="rotate(6 24.3 20.7)"/></svg>
<div class="a" style="left:1909px;top:146.3px;width:1.3px;height:24px;background:#c8c8c8;"></div>
<svg class="a" style="left:1933px;top:144px;" width="28" height="26" viewBox="0 0 28 26"><path d="M3.5 2.5 H18.5 L24 7.5 V21 Q24 22.8 22.2 22.8 H5.3 Q3.5 22.8 3.5 21 Z" fill="none" stroke="#8e8e8e" stroke-width="2.2" stroke-linejoin="round"/><path d="M8.5 3 V8.5 H18 V3 M8 22.5 V15 H19.5 V22.5" fill="none" stroke="#8e8e8e" stroke-width="2.2"/></svg>
<svg class="a" style="left:1992px;top:143px;" width="34" height="32" viewBox="0 0 34 32"><path d="M9.5 22 H8 Q2.5 22 2.5 16.5 Q2.5 12 7.5 11.2 Q8.5 4 16 4 Q22.5 4 24 10.3 Q30 10.8 30 16.3 Q30 22 24.5 22 H23" fill="none" stroke="#222" stroke-width="2.4" stroke-linecap="round"/><path d="M16.5 29 V14 M10.8 19.2 L16.5 13.5 L22.2 19.2" fill="none" stroke="#222" stroke-width="2.4" stroke-linecap="round" stroke-linejoin="round"/></svg>
<svg class="a" style="left:2055px;top:143px;" width="32" height="30" viewBox="0 0 32 30"><path d="M8 9.5 V3 H24 V9.5" fill="none" stroke="#222" stroke-width="2.3"/><rect x="3" y="9.5" width="26" height="12.5" rx="1.5" fill="none" stroke="#222" stroke-width="2.3"/><rect x="8" y="15.5" width="16" height="11.5" fill="#fff" stroke="#222" stroke-width="2.3"/><path d="M11.5 21.3 H20.5" stroke="#222" stroke-width="2.3"/></svg>
<div class="a" style="left:2108px;top:146.3px;width:1.3px;height:24px;background:#c8c8c8;"></div>
<div class="a" style="left:2124px;top:133.8px;width:98px;height:48px;background:#222;border-radius:24px;"></div>
<span class="t" style="left:2148.00px;top:149.00px;font-size:19.5px;color:#fff;letter-spacing:-0.762px;-webkit-text-stroke:0.7px #fff;">Share</span>
<div class="a" style="left:2238px;top:134px;width:215px;height:47.5px;border-radius:24px;background:linear-gradient(90deg,#ff6a4d 0%,#e8676d 18%,#b86aa8 45%,#8a6cd8 68%,#6568ff 88%,#6568ff 100%);"></div>
<svg class="a" style="left:2253px;top:141px;" width="34" height="32" viewBox="0 0 34 32"><path d="M15 5.5 H6.5 Q4 5.5 4 8 V20 Q4 22.5 6.5 22.5 H8.5 V28 L14.5 22.5 H24 Q26.5 22.5 26.5 20 V15" fill="none" stroke="#fff" stroke-width="2.5" stroke-linejoin="round" stroke-linecap="round"/>
<path d="M25.5 1 L27.2 5.8 L32 7.5 L27.2 9.2 L25.5 14 L23.8 9.2 L19 7.5 L23.8 5.8 Z" fill="#fff"/><path d="M15.5 12.5 L16.5 15 L19 16 L16.5 17 L15.5 19.5 L14.5 17 L12 16 L14.5 15 Z" fill="#fff"/></svg>
<span class="t" style="left:2293.00px;top:149.00px;font-size:19.5px;color:#fff;letter-spacing:-0.116px;-webkit-text-stroke:0.7px #fff;">Ask AI Assistant</span>
<div class="a" style="left:811px;top:193.1px;width:1588px;height:69.4px;background:#dceefd;"></div>
<svg class="a" style="left:833px;top:213.5px;" width="32" height="30" viewBox="0 0 32 30"><path d="M15.7 4.5 H5.3 Q3.3 4.5 3.3 6.5 V22.7 Q3.3 24.7 5.3 24.7 H24.4 Q26.4 24.7 26.4 22.7 V12" fill="none" stroke="#5a48d6" stroke-width="2.5" stroke-linejoin="round" stroke-linecap="round"/><path d="M7.6 9.1 H13.6 M7.6 14.4 H10.7 M7.6 20.2 H13.6" stroke="#5a48d6" stroke-width="2.3" stroke-linecap="round"/><rect x="13" y="12.2" width="4.4" height="4.4" fill="#5a48d6" transform="rotate(-12 15.2 14.4)"/><path d="M25.86 -0.09 L26.17 4.62 L29.34 8.11 L24.63 8.42 L21.14 11.59 L20.83 6.88 L17.66 3.39 L22.37 3.08 Z" fill="#5a48d6"/><circle cx="23.5" cy="5.75" r="0.8" fill="#dceefd"/></svg>
<span class="t" style="left:880.00px;top:218.00px;font-size:18px;color:#111;letter-spacing:0.515px;">Save time with a document summary using AI Assistant.</span>
<div class="a" style="left:2130.8px;top:203px;width:183px;height:48px;border:2.9px solid #1c1c1c;border-radius:24px;box-sizing:border-box;"></div>
<span class="t" style="left:2155.00px;top:218.00px;font-size:19px;color:#111;letter-spacing:0.599px;-webkit-text-stroke:0.5px #111;">View Summary</span>
<div class="a" style="left:2325.3px;top:204px;width:1.3px;height:47px;background:#b9c4cf;"></div>
<svg class="a" style="left:2355px;top:219.2px;" width="16" height="16" viewBox="0 0 16 16"><path d="M2.5 2.5 L13.5 13.5 M13.5 2.5 L2.5 13.5" stroke="#111" stroke-width="2.7"/></svg>
<div class="a" style="left:811px;top:262.5px;width:127px;height:1166px;background:#f8f8f8;"></div>
<div class="a" style="left:937px;top:262px;width:1.4px;height:1166px;background:#d4d4d4;"></div>
<div class="a" style="left:830.2px;top:280.8px;width:58.5px;height:437.5px;background:#fff;border:1.6px solid #b4b4b4;border-radius:7px;box-sizing:border-box;"></div>
<div class="a" style="left:835.7px;top:286.5px;width:48.2px;height:6.2px;background:#b5b5b5;border-radius:3px;"></div>
<div class="a" style="left:835.7px;top:304.8px;width:48.2px;height:48px;background:#0b62da;border-radius:5px;"></div>
<svg class="a" style="left:835.7px;top:304.8px;" width="48" height="48" viewBox="0 0 48 48"><path d="M17.4 12 V31.3 L22 27.2 L25.3 35.6 L28.5 34.3 L25.1 26 H31.2 Z" fill="#fff"/><path d="M41.2 33.4 V41.4 H33.2 Z" fill="#fff"/></svg>
<svg class="a" style="left:835.7px;top:364.8px;" width="48" height="48" viewBox="0 0 48 48"><path d="M22.9 11.1 A11.5 11.5 0 0 1 34.4 22.6 V34.1 H22.9 A11.5 11.5 0 0 1 22.9 11.1 Z" fill="none" stroke="#222" stroke-width="2.4" stroke-linejoin="round"/><path d="M16.5 19.6 H28.6 M16.5 24.6 H24.6" stroke="#222" stroke-width="2.3" stroke-linecap="round"/><path d="M41.2 33.6 V41.6 H33.2 Z" fill="#222"/></svg>
<svg class="a" style="left:835.7px;top:424.8px;" width="48" height="48" viewBox="0 0 48 48"><path d="M19.2 30.2 L15.2 26.2 L30.6 11.4 Q32.1 10.1 33.5 11.5 L35.6 13.6 Q36.9 15 35.6 16.4 Z" fill="none" stroke="#222" stroke-width="2.3" stroke-linejoin="round"/><path d="M9.5 34.6 L14.6 28.4 L18.6 32.4 L16.6 34.6 Z" fill="#222"/><path d="M20.5 34.6 L23.8 30.8 H35.8 L32.5 34.6 Z" fill="#8e8e8e"/><path d="M41.2 33.2 V41.2 H33.2 Z" fill="#222"/></svg>
<svg class="a" style="left:835.7px;top:484.8px;" width="48" height="48" viewBox="0 0 48 48"><path d="M24 24.7 C28 24.7 33.5 24.5 34.3 19.5 C35 14.5 28 13.4 23 13.9 C16 14.6 11 18 11 22.5 C11 27.5 16 30.6 21 30.9 C24 31 27 31 29 30.6" fill="none" stroke="#222" stroke-width="2.3" stroke-linecap="round"/><path d="M41.2 33.2 V41.2 H33.2 Z" fill="#222"/></svg>
<svg class="a" style="left:835.7px;top:544.8px;" width="48" height="48" viewBox="0 0 48 48"><rect x="10.8" y="10.9" width="24.3" height="24.3" fill="none" stroke="#222" stroke-width="2.5" stroke-dasharray="3.3 2.1"/><path d="M17.2 29.8 L23 16 L28.8 29.8 M19.4 25.2 H26.6" fill="none" stroke="#222" stroke-width="2.3"/><path d="M41.2 33.4 V41.4 H33.2 Z" fill="#222"/></svg>
<svg class="a" style="left:835.7px;top:604.8px;" width="48" height="48" viewBox="0 0 48 48"><path d="M10.5 33.5 L14.2 20.8 L23.5 12.2 L32.2 20.9 L24.4 29.6 Z" fill="none" stroke="#222" stroke-width="2.3" stroke-linejoin="round"/><path d="M19.8 15.6 L28.8 24.6 M10.8 33.2 L19.3 24.7" stroke="#222" stroke-width="2.2"/><path d="M26.5 32.6 Q29.5 28 31 31.5 Q32 34 34.5 31.5 L36 33.5" fill="none" stroke="#222" stroke-width="2"/><path d="M41.2 33.2 V41.2 H33.2 Z" fill="#222"/></svg>
<svg class="a" style="left:835.7px;top:675px;" width="48" height="24" viewBox="0 0 48 24"><circle cx="14.7" cy="12" r="1.95" fill="#222"/><circle cx="23.2" cy="12" r="1.95" fill="#222"/><circle cx="31.7" cy="12" r="1.95" fill="#222"/></svg>
<div class="a" style="left:2341px;top:262px;width:1.3px;height:1166px;background:#d6d6d6;"></div>
<div class="a" style="left:2342.3px;top:262px;width:30px;height:1166px;background:#f8f8f8;"></div>
<div class="a" style="left:2372.5px;top:262px;width:26px;height:1166px;background:#efefef;"></div>
<div class="a" style="left:2372.5px;top:263px;width:26px;height:11.5px;background:#e2e2e2;border:1px solid #c9c9c9;box-sizing:border-box;"></div>
<div class="a" style="left:2383.6px;top:583.5px;width:5px;height:177px;background:#8c8c8c;border-radius:3px;"></div>
<div class="a" style="left:2398.4px;top:193.1px;width:74.5px;height:1236px;background:#fff;border-left:1.6px solid #cfcfcf;box-sizing:border-box;"></div>
<svg class="a" style="left:2419px;top:216px;" width="32" height="30" viewBox="0 0 32 30"><path d="M15.7 4.5 H5.3 Q3.3 4.5 3.3 6.5 V22.7 Q3.3 24.7 5.3 24.7 H24.4 Q26.4 24.7 26.4 22.7 V12" fill="none" stroke="#5a48d6" stroke-width="2.5" stroke-linejoin="round" stroke-linecap="round"/><path d="M7.6 9.1 H13.6 M7.6 14.4 H10.7 M7.6 20.2 H13.6" stroke="#5a48d6" stroke-width="2.3" stroke-linecap="round"/><rect x="13" y="12.2" width="4.4" height="4.4" fill="#5a48d6" transform="rotate(-12 15.2 14.4)"/><path d="M25.86 -0.09 L26.17 4.62 L29.34 8.11 L24.63 8.42 L21.14 11.59 L20.83 6.88 L17.66 3.39 L22.37 3.08 Z" fill="#5a48d6"/><circle cx="23.5" cy="5.75" r="0.8" fill="#dceefd"/></svg>
<div class="a" style="left:2419px;top:261.5px;width:31px;height:1.2px;background:#d8d8d8;"></div>
<svg class="a" style="left:2418px;top:276.3px;" width="32" height="32" viewBox="0 0 32 32"><path d="M18 6.5 Q26.5 6.5 26.5 14.5 V22 H18 Q9.5 22 9.5 14.5 Q9.5 6.5 18 6.5 Z" fill="none" stroke="#1f1f1f" stroke-width="2.3"/><path d="M15 12.5 H21.5 M15 16.5 H19.5" stroke="#1f1f1f" stroke-width="2.1" stroke-linecap="round"/><path d="M7.5 9 Q4.5 12 4.5 16.5 Q4.5 26.5 15 26.5 H25.5" fill="none" stroke="#1f1f1f" stroke-width="2.3" stroke-linecap="round"/></svg>
<svg class="a" style="left:2418px;top:332.8px;" width="32" height="32" viewBox="0 0 32 32"><path d="M5.5 4.5 H19.5 V27 L12.5 21.5 L5.5 27 Z" fill="none" stroke="#1f1f1f" stroke-width="2.4" stroke-linejoin="round"/><path d="M23 7.5 H29 M23 12 H29 M23 16.5 H29" stroke="#1f1f1f" stroke-width="2.1"/></svg>
<svg class="a" style="left:2418px;top:389.8px;" width="32" height="32" viewBox="0 0 32 32"><path d="M13.500 9 H21 L27.5 15.500 V26 Q27.500 28 25.500 28 H13.500 Q11.500 28 11.500 26 V11 Q11.500 9 13.500 9 Z" fill="none" stroke="#1f1f1f" stroke-width="2.3" stroke-linejoin="round"/><path d="M20.5 9.500 V16 H27" fill="none" stroke="#1f1f1f" stroke-width="2.2"/><path d="M8 23.500 Q5.500 23.500 5.500 21 V7 Q5.500 4 8.500 4 H17" fill="none" stroke="#1f1f1f" stroke-width="2.3" stroke-linecap="round"/></svg>
<svg class="a" style="left:2418px;top:446.3px;" width="32" height="32" viewBox="0 0 32 32"><path d="M8.5 4.500 H19 L25.5 11 V26 Q25.500 28 23.500 28 H8.500 Q6.500 28 6.500 26 V6.500 Q6.500 4.500 8.500 4.500 Z" fill="none" stroke="#1f1f1f" stroke-width="2.3" stroke-linejoin="round"/><path d="M18.5 5 V11.500 H25" fill="none" stroke="#1f1f1f" stroke-width="2.2"/><path d="M10.5 15 H19 M10.5 19 H16 M10.5 23 H19" stroke="#1f1f1f" stroke-width="2"/></svg>
<svg class="a" style="left:2418px;top:503.8px;" width="32" height="32" viewBox="0 0 32 32"><path d="M15.500 3.500 L24.500 10.500 V26 Q24.500 28 22.500 28 H8.500 Q6.500 28 6.500 26 V10.500 Z" fill="none" stroke="#1f1f1f" stroke-width="2.3" stroke-linejoin="round"/><circle cx="15.5" cy="10.5" r="1.2" fill="#1f1f1f"/><path d="M11 17.5 H20 M11 22 H20" stroke="#1f1f1f" stroke-width="2.1"/></svg>
<div class="a" style="left:2410.6px;top:1011.2px;width:47px;height:48px;background:#fff;border:1.3px solid #b5b5b5;border-radius:6px;box-sizing:border-box;"></div>
<span class="t" style="left:2428.79px;top:1026.00px;font-size:18px;color:#111;">2</span>
<span class="t" style="left:2428.99px;top:1077.00px;font-size:18px;color:#111;">4</span>
<svg class="a" style="left:2421.7px;top:1128.4px;" width="26" height="20" viewBox="0 0 26 20"><path d="M6 14 L13 7 L20 14" fill="none" stroke="#222" stroke-width="2.6"/></svg>
<svg class="a" style="left:2421.7px;top:1178.2px;" width="26" height="20" viewBox="0 0 26 20"><path d="M6 6.5 L13 13.5 L20 6.5" fill="none" stroke="#222" stroke-width="2.6"/></svg>
<div class="a" style="left:2410.2px;top:1214px;width:48.6px;height:1px;background:#e0e0e0;"></div>
<svg class="a" style="left:2420.2px;top:1228.8px;" width="32" height="32" viewBox="0 0 32 32"><path d="M24.1 20.9 A10.3 10.3 0 1 1 23.6 9.8" fill="none" stroke="#222" stroke-width="2.4" stroke-linecap="round"/><path d="M18.9 11.6 H26.9 V5" fill="none" stroke="#222" stroke-width="2.4" stroke-linejoin="round" stroke-linecap="round"/></svg>
<svg class="a" style="left:2419px;top:1280.3px;" width="40" height="36" viewBox="0 0 40 36"><path d="M8.6 3 H17.7 L24.7 10 V23.7 Q24.7 25.7 22.7 25.7 H8.6 Q6.6 25.7 6.6 23.7 V5 Q6.6 3 8.6 3 Z" fill="none" stroke="#222" stroke-width="2.4" stroke-linejoin="round"/><path d="M17.2 3.5 V10.5 H24.2" fill="none" stroke="#222" stroke-width="2.1"/><path d="M10.3 15.8 L12 14.8 V21.6 M19 15.8 L20.7 14.8 V21.6" fill="none" stroke="#222" stroke-width="1.9"/><circle cx="15.6" cy="16.8" r="1" fill="#222"/><circle cx="15.6" cy="20.8" r="1" fill="#222"/><path d="M34.1 26.4 V33.6 H26.9 Z" fill="#222"/></svg>
<svg class="a" style="left:2420.4px;top:1335.3px;" width="32" height="32" viewBox="0 0 32 32"><circle cx="12.8" cy="12.2" r="8.9" fill="none" stroke="#222" stroke-width="2.4"/><path d="M19.3 18.7 L26.6 25.1" stroke="#222" stroke-width="2.5" stroke-linecap="round"/><path d="M12.8 8 V16.4 M8.6 12.2 H17" stroke="#222" stroke-width="2.3"/></svg>
<svg class="a" style="left:2420.4px;top:1388.2px;" width="32" height="32" viewBox="0 0 32 32"><circle cx="12.8" cy="12.2" r="8.9" fill="none" stroke="#222" stroke-width="2.4"/><path d="M19.3 18.7 L26.6 25.1" stroke="#222" stroke-width="2.5" stroke-linecap="round"/><path d="M8.6 12.2 H17" stroke="#222" stroke-width="2.5"/></svg>
<span class="t" style="left:1072.00px;top:282.00px;font-size:46px;color:#a64dff;font-weight:700;">Acme Corp</span>
<span class="t" style="left:1068.40px;top:380.00px;font-size:27.62px;color:#000;font-weight:700;">1. Scope of Services</span>
<span class="t" style="left:1068.40px;top:427.00px;font-size:25.34px;color:#000;">Service Provider agrees to perform the</span>
<span class="t" style="left:1068.40px;top:457.00px;font-size:25.34px;color:#000;">following services (the “Services”):</span>
<span class="t" style="left:1068.40px;top:515.00px;font-size:25.34px;color:#000;">Service 1 details</span>
<span class="t" style="left:1068.40px;top:573.00px;font-size:25.34px;color:#000;">Service Provider will use its best efforts,</span>
<span class="t" style="left:1068.40px;top:602.00px;font-size:25.34px;color:#000;">expertise, and skills to provide the Services in a</span>
<span class="t" style="left:1068.40px;top:631.00px;font-size:25.34px;color:#000;">timely and professional manner.</span>
<span class="t" style="left:1068.40px;top:676.00px;font-size:27.62px;color:#000;font-weight:700;">2. Term</span>
<span class="t" style="left:1068.40px;top:724.00px;font-size:25.34px;color:#000;">This Agreement shall commence on</span>
<span class="t" style="left:1068.40px;top:753.00px;font-size:25.34px;color:#000;">2020-01-01 and continue until 2020-12-31,</span>
<span class="t" style="left:1068.40px;top:782.00px;font-size:25.34px;color:#000;">unless terminated earlier in accordance with</span>
<span class="t" style="left:1068.40px;top:811.00px;font-size:25.34px;color:#000;">Section 8 of this Agreement.</span>
<span class="t" style="left:1068.40px;top:857.00px;font-size:27.62px;color:#000;font-weight:700;">3. Compensation</span>
<span class="t" style="left:1068.40px;top:905.00px;font-size:25.34px;color:#000;">Client agrees to pay Service Provider as</span>
<span class="t" style="left:1068.40px;top:934.00px;font-size:25.34px;color:#000;">follows:</span>
<div class="a" style="left:1070.2px;top:999.4999999999999px;width:11.3px;height:11.3px;background:#000;border-radius:50%;"></div>
<span class="t" style="left:1110.00px;top:992.00px;font-size:25.34px;color:#000;">Service Fees: <b>$1,000</b> for the Services as</span>
<span class="t" style="left:1110.00px;top:1021.00px;font-size:25.34px;color:#000;">outlined in Section 1.</span>
<div class="a" style="left:1070.2px;top:1057.7px;width:11.3px;height:11.3px;background:#000;border-radius:50%;"></div>
<span class="t" style="left:1110.00px;top:1050.00px;font-size:25.34px;color:#000;">Payment Terms: <b>net 30</b>.</span>
<span class="t" style="left:1068.40px;top:1107.00px;font-size:25.34px;color:#000;">Invoices will be issued monthly, and payments</span>
<span class="t" style="left:1068.40px;top:1137.00px;font-size:25.34px;color:#000;">are due 30 days after receipt of the invoice.</span>
<span class="t" style="left:1068.40px;top:1166.00px;font-size:25.34px;color:#000;">Late payments will incur a <b>$50</b> late fee.</span>
<span class="t" style="left:1068.40px;top:1211.00px;font-size:27.62px;color:#000;font-weight:700;">4. Expenses</span>
<span class="t" style="left:1068.40px;top:1259.00px;font-size:25.34px;color:#000;">Any additional expenses required to perform</span>
<span class="t" style="left:1068.40px;top:1288.00px;font-size:25.34px;color:#000;">the Services, such as travel, materials, or</span>
<span class="t" style="left:1068.40px;top:1317.00px;font-size:25.34px;color:#000;">third-party services, must be pre-approved by</span>
<span class="t" style="left:1068.40px;top:1346.00px;font-size:25.34px;color:#000;">the Client in writing. Client will reimburse</span>
<span class="t" style="left:1068.40px;top:1375.00px;font-size:25.34px;color:#000;">Service Provider for such approved expenses</span>
<span class="t" style="left:1068.40px;top:1404.00px;font-size:25.34px;color:#000;">within 30 days of receiving an invoice.</span>
<span class="t" style="left:1635.80px;top:380.00px;font-size:27.62px;color:#000;font-weight:700;">7. Intellectual Property</span>
<span class="t" style="left:1635.80px;top:428.00px;font-size:25.34px;color:#000;">All materials, designs, documents, or other</span>
<span class="t" style="left:1635.80px;top:457.00px;font-size:25.34px;color:#000;">intellectual property created by Service</span>
<span class="t" style="left:1635.80px;top:486.00px;font-size:25.34px;color:#000;">Provider during the course of this Agreement</span>
<span class="t" style="left:1635.80px;top:515.00px;font-size:25.34px;color:#000;">shall be the exclusive property of Client.</span>
<span class="t" style="left:1635.80px;top:544.00px;font-size:25.34px;color:#000;">Service Provider grants Client a exclusive</span>
<span class="t" style="left:1635.80px;top:573.00px;font-size:25.34px;color:#000;">license to use these materials for its business</span>
<span class="t" style="left:1635.80px;top:602.00px;font-size:25.34px;color:#000;">purposes.</span>
<span class="t" style="left:1635.80px;top:647.00px;font-size:27.62px;color:#000;font-weight:700;">8. Termination</span>
<span class="t" style="left:1635.80px;top:695.00px;font-size:25.34px;color:#000;">Either party may terminate this Agreement:</span>
<div class="a" style="left:1637.6px;top:760.8px;width:11.3px;height:11.3px;background:#000;border-radius:50%;"></div>
<span class="t" style="left:1677.40px;top:753.00px;font-size:25.34px;color:#000;">For Convenience: Upon 30 written notice to</span>
<span class="t" style="left:1677.40px;top:782.00px;font-size:25.34px;color:#000;">the other party.</span>
<div class="a" style="left:1637.6px;top:818.9px;width:11.3px;height:11.3px;background:#000;border-radius:50%;"></div>
<span class="t" style="left:1677.40px;top:811.00px;font-size:25.34px;color:#000;">For Cause: If either party breaches any</span>
<span class="t" style="left:1677.40px;top:840.00px;font-size:25.34px;color:#000;">material term of this Agreement and fails to</span>
<span class="t" style="left:1677.40px;top:869.00px;font-size:25.34px;color:#000;">remedy the breach within 30 after written</span>
<span class="t" style="left:1677.40px;top:898.00px;font-size:25.34px;color:#000;">notice of the breach.</span>
<span class="t" style="left:1635.80px;top:956.00px;font-size:25.34px;color:#000;">Upon termination, Service Provider will deliver</span>
<span class="t" style="left:1635.80px;top:985.00px;font-size:25.34px;color:#000;">all completed work to the Client, and any</span>
<span class="t" style="left:1635.80px;top:1014.00px;font-size:25.34px;color:#000;">unpaid fees for Services rendered will become</span>
<span class="t" style="left:1635.80px;top:1043.00px;font-size:25.34px;color:#000;">immediately due and payable.</span>
<span class="t" style="left:1635.80px;top:1089.00px;font-size:27.62px;color:#000;font-weight:700;">9. Indemnification</span>
<span class="t" style="left:1635.80px;top:1137.00px;font-size:25.34px;color:#000;">Each party agrees to indemnify and hold</span>
<span class="t" style="left:1635.80px;top:1166.00px;font-size:25.34px;color:#000;">harmless the other party from any and all</span>
<span class="t" style="left:1635.80px;top:1195.00px;font-size:25.34px;color:#000;">claims, damages, losses<span style="font-size:16px;position:relative;top:-10px">1</span>, or liabilities arising</span>
<span class="t" style="left:1635.80px;top:1224.00px;font-size:25.34px;color:#000;">from any breach of this Agreement or the</span>
<span class="t" style="left:1635.80px;top:1253.00px;font-size:25.34px;color:#000;">performance of services under this Agreement.</span>
<span class="t" style="left:1635.80px;top:1298.00px;font-size:27.62px;color:#000;font-weight:700;">10. Limitation of Liability</span>
<span class="t" style="left:1635.80px;top:1346.00px;font-size:25.34px;color:#000;">Service Provider’s liability for any claim arising</span>
<span class="t" style="left:1635.80px;top:1375.00px;font-size:25.34px;color:#000;">out of this Agreement shall not exceed the total</span>
<span class="t" style="left:1635.80px;top:1404.00px;font-size:25.34px;color:#000;">compensation paid by Client to Service</span></div></div>
</body></html>
